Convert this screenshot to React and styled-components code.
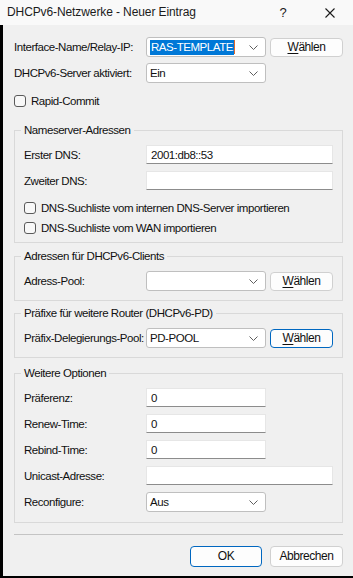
import React from "react";
import styled, { createGlobalStyle } from "styled-components";

const GlobalStyle = createGlobalStyle`
  html, body {
    margin: 0;
    padding: 0;
    background: #000;
  }
  * {
    box-sizing: border-box;
  }
`;

const FONT = `"Liberation Sans", Arial, sans-serif`;

const Window = styled.div`
  width: 353px;
  height: 578px;
  background: #000;
  display: flex;
  flex-direction: column;
  font-family: ${FONT};
  font-size: 11.5px;
  letter-spacing: -0.45px;
  color: #111;
  overflow: hidden;
`;

const TitleBar = styled.div`
  height: 25px;
  flex: 0 0 25px;
  background: #f9f9f9;
  display: flex;
  align-items: center;
  padding-left: 7px;
  font-size: 12px;
  letter-spacing: -0.1px;
  color: #1b1b1b;
`;

const TitleText = styled.span`
  flex: 1;
  padding-bottom: 1px;
`;

const HelpGlyph = styled.span`
  width: 12px;
  margin-right: 36px;
  font-size: 13px;
  text-align: center;
`;

const CloseGlyph = styled.span`
  display: flex;
  margin-right: 18px;
`;

const Body = styled.div`
  flex: 1;
  margin: 0 0 2px 3px;
  background: #f0f0f0;
  padding: 12px 10px 0 11px;
  display: flex;
  flex-direction: column;
`;

const Row = styled.div`
  display: grid;
  grid-template-columns: ${(p) => p.$cols};
  column-gap: 4px;
  align-items: center;
  height: ${(p) => p.$h || 20}px;
  margin-top: ${(p) => p.$mt || 0}px;
`;

const Label = styled.span`
  white-space: nowrap;
`;

const Combo = styled.div`
  height: 20px;
  background: #fff;
  border: 1px solid #bfbfbf;
  border-radius: 3px;
  display: flex;
  align-items: center;
  padding: 0 7px 0 2px;
`;

const ComboValue = styled.span`
  flex: 1;
  padding-left: 1px;
  white-space: nowrap;
  display: flex;
  align-items: center;
`;

const Selected = styled.span`
  background: #0078d7;
  color: #fff;
  padding: 0 1px 1px;
  line-height: 14px;
`;

const Caret = styled.span`
  width: 1px;
  height: 14px;
  background: #e06a2c;
`;

const TextInput = styled.div`
  height: 19px;
  background: #fff;
  border: 1px solid #e6e6e6;
  border-bottom-color: #8c8c8c;
  display: flex;
  align-items: center;
  padding-left: 4px;
`;

const Button = styled.div`
  height: ${(p) => p.$h || 19}px;
  background: #fdfdfd;
  border: 1px solid ${(p) => (p.$focus ? "#0067c0" : "#d0d0d0")};
  border-radius: 4px;
  display: flex;
  align-items: center;
  justify-content: center;
  padding-bottom: 1px;
  font-size: 12px;
  u {
    text-decoration-thickness: 1px;
    text-underline-offset: 2px;
  }
`;

const CheckRow = styled.label`
  display: flex;
  align-items: center;
  gap: 5px;
  height: ${(p) => p.$h || 20}px;
  margin-top: ${(p) => p.$mt || 0}px;
`;

const Box = styled.span`
  width: 12px;
  height: 12px;
  border: 1px solid #5a5a5a;
  border-radius: 3px;
  background: #f8f8f8;
  flex: 0 0 12px;
`;

const Group = styled.fieldset`
  margin: ${(p) => p.$mt || 0}px 0 0;
  padding: 0 9px ${(p) => p.$pb || 9}px 9px;
  border: 1px solid #d9d9d9;
  border-radius: 0;
  min-width: 0;
`;

const Legend = styled.legend`
  padding: 0 3px;
  margin-left: -3px;
  line-height: 14px;
  height: 14px;
  margin-bottom: ${(p) => p.$mb || 8}px;
`;

const Separator = styled.div`
  height: 1px;
  background: #c4c4c4;
  margin-top: 11px;
`;

const Footer = styled.div`
  display: flex;
  justify-content: flex-end;
  gap: 8px;
  margin-top: 11px;
`;

const FooterButton = styled(Button)`
  width: ${(p) => p.$w}px;
`;

const Chevron = () => (
  <svg width="9" height="5" viewBox="0 0 9 5">
    <path d="M0.5 0.5 L4.5 4.5 L8.5 0.5" fill="none" stroke="#5f5f5f" strokeWidth="1" />
  </svg>
);

const CloseIcon = () => (
  <svg width="10" height="10" viewBox="0 0 10 10">
    <path d="M0.5 0.5 L9.5 9.5 M9.5 0.5 L0.5 9.5" stroke="#1b1b1b" strokeWidth="1.1" />
  </svg>
);

const TOP_COLS = "128px 120px 73px";
const GRP_COLS = "118px 120px 63px";
const GRP_WIDE = "118px 187px";
const GRP_SHORT = "118px 120px";

const Waehlen = ({ focus }) => (
  <Button $focus={focus}>
    <span>
      <u>W</u>ählen
    </span>
  </Button>
);

export default function App() {
  return (
    <Window>
      <GlobalStyle />
      <TitleBar>
        <TitleText>DHCPv6-Netzwerke - Neuer Eintrag</TitleText>
        <HelpGlyph>?</HelpGlyph>
        <CloseGlyph>
          <CloseIcon />
        </CloseGlyph>
      </TitleBar>
      <Body>
        <Row $cols={TOP_COLS}>
          <Label>Interface-Name/Relay-IP:</Label>
          <Combo>
            <ComboValue>
              <Selected>RAS-TEMPLATE</Selected>
              <Caret />
            </ComboValue>
            <Chevron />
          </Combo>
          <Waehlen />
        </Row>
        <Row $cols={TOP_COLS} $mt={6}>
          <Label>DHCPv6-Server aktiviert:</Label>
          <Combo>
            <ComboValue>Ein</ComboValue>
            <Chevron />
          </Combo>
        </Row>
        <CheckRow $mt={8}>
          <Box />
          Rapid-Commit
        </CheckRow>

        <Group $mt={12} $pb={5}>
          <Legend>Nameserver-Adressen</Legend>
          <Row $cols={GRP_WIDE} $h={19}>
            <Label>Erster DNS:</Label>
            <TextInput>2001:db8::53</TextInput>
          </Row>
          <Row $cols={GRP_WIDE} $h={19} $mt={7}>
            <Label>Zweiter DNS:</Label>
            <TextInput />
          </Row>
          <CheckRow $mt={8}>
            <Box />
            DNS-Suchliste vom internen DNS-Server importieren
          </CheckRow>
          <CheckRow $h={19}>
            <Box />
            DNS-Suchliste vom WAN importieren
          </CheckRow>
        </Group>

        <Group $mt={6}>
          <Legend>Adressen für DHCPv6-Clients</Legend>
          <Row $cols={GRP_COLS}>
            <Label>Adress-Pool:</Label>
            <Combo>
              <ComboValue />
              <Chevron />
            </Combo>
            <Waehlen />
          </Row>
        </Group>

        <Group $mt={5}>
          <Legend>Präfixe für weitere Router (DHCPv6-PD)</Legend>
          <Row $cols={GRP_COLS}>
            <Label>Präfix-Delegierungs-Pool:</Label>
            <Combo>
              <ComboValue>PD-POOL</ComboValue>
              <Chevron />
            </Combo>
            <Waehlen focus />
          </Row>
        </Group>

        <Group $mt={8} $pb={10}>
          <Legend>Weitere Optionen</Legend>
          <Row $cols={GRP_SHORT} $h={19}>
            <Label>Präferenz:</Label>
            <TextInput>0</TextInput>
          </Row>
          <Row $cols={GRP_SHORT} $h={19} $mt={7}>
            <Label>Renew-Time:</Label>
            <TextInput>0</TextInput>
          </Row>
          <Row $cols={GRP_SHORT} $h={19} $mt={7}>
            <Label>Rebind-Time:</Label>
            <TextInput>0</TextInput>
          </Row>
          <Row $cols={GRP_WIDE} $h={19} $mt={7}>
            <Label>Unicast-Adresse:</Label>
            <TextInput />
          </Row>
          <Row $cols={GRP_SHORT} $mt={7}>
            <Label>Reconfigure:</Label>
            <Combo>
              <ComboValue>Aus</ComboValue>
              <Chevron />
            </Combo>
          </Row>
        </Group>

        <Separator />
        <Footer>
          <FooterButton $w={72} $h={21} $focus>
            OK
          </FooterButton>
          <FooterButton $w={73} $h={21}>
            Abbrechen
          </FooterButton>
        </Footer>
      </Body>
    </Window>
  );
}
